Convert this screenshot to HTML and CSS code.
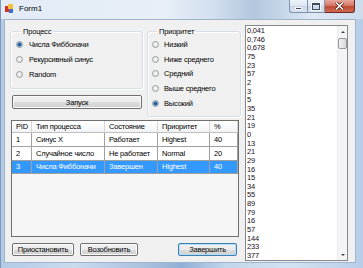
FILE: index.html
```html
<!DOCTYPE html>
<html lang="ru">
<head>
    <meta charset="UTF-8">
    <title>Form1</title>
    <link rel="stylesheet" href="styles.css">
</head>
<body>
    <div class="window">
        <div class="titlebar">
            <svg class="app-icon" width="9" height="9" viewBox="0 0 9 9">
                <rect x="0" y="2" width="4" height="6" fill="#d7301f"/>
                <rect x="3" y="0" width="5" height="5" fill="#f3c33a"/>
                <rect x="4" y="5" width="4" height="4" fill="#3d6fce"/>
            </svg>
            <span class="title">Form1</span>
            <div class="caption-buttons">
                <div class="cap cap-min"><span class="glyph-min"></span></div>
                <div class="cap cap-max"><span class="glyph-max"></span></div>
                <div class="cap cap-close">
                    <svg width="9" height="8" viewBox="0 0 9 8">
                        <path d="M1 0.5 L8 7.5 M8 0.5 L1 7.5" stroke="#3a1510" stroke-width="3"/>
                        <path d="M1 0.5 L8 7.5 M8 0.5 L1 7.5" stroke="#ffffff" stroke-width="1.6"/>
                    </svg>
                </div>
            </div>
        </div>

        <div class="client">
            <div class="left-col">
                <div class="top-row">
                    <div class="proc-col">
                        <fieldset class="group group-proc">
                            <legend>Процесс</legend>
                            <div class="radio checked"><span class="mark"></span>Числа Фиббоначи</div>
                            <div class="radio"><span class="mark"></span>Рекурсивный синус</div>
                            <div class="radio"><span class="mark"></span>Random</div>
                        </fieldset>
                        <button class="btn btn-start">Запуск</button>
                    </div>
                    <fieldset class="group group-prio">
                        <legend>Приоритет</legend>
                        <div class="radio"><span class="mark"></span>Низкий</div>
                        <div class="radio"><span class="mark"></span>Ниже среднего</div>
                        <div class="radio"><span class="mark"></span>Средний</div>
                        <div class="radio"><span class="mark"></span>Выше среднего</div>
                        <div class="radio checked"><span class="mark"></span>Высокий</div>
                    </fieldset>
                </div>

                <div class="grid">
                    <div class="grid-row grid-head">
                        <div class="cell">PID</div>
                        <div class="cell">Тип процесса</div>
                        <div class="cell">Состояние</div>
                        <div class="cell">Приоритет</div>
                        <div class="cell">%</div>
                    </div>
                    <div class="grid-row">
                        <div class="cell">1</div>
                        <div class="cell">Синус X</div>
                        <div class="cell">Работает</div>
                        <div class="cell">Highest</div>
                        <div class="cell">40</div>
                    </div>
                    <div class="grid-row">
                        <div class="cell">2</div>
                        <div class="cell">Случайное число</div>
                        <div class="cell">Не работает</div>
                        <div class="cell">Normal</div>
                        <div class="cell">20</div>
                    </div>
                    <div class="grid-row selected">
                        <div class="cell">3</div>
                        <div class="cell">Числа Фиббоначи</div>
                        <div class="cell">Завершен</div>
                        <div class="cell">Highest</div>
                        <div class="cell">40</div>
                    </div>
                </div>

                <div class="bottom-buttons">
                    <button class="btn btn-pause">Приостановить</button>
                    <button class="btn btn-resume">Возобновить</button>
                    <button class="btn btn-stop btn-default">Завершить</button>
                </div>
            </div>

            <div class="listbox">
                <div class="items">
                    <div>0,041</div>
                    <div>0,746</div>
                    <div>0,678</div>
                    <div>75</div>
                    <div>23</div>
                    <div>57</div>
                    <div>2</div>
                    <div>3</div>
                    <div>5</div>
                    <div>35</div>
                    <div>21</div>
                    <div>19</div>
                    <div>0</div>
                    <div>13</div>
                    <div>21</div>
                    <div>29</div>
                    <div>16</div>
                    <div>15</div>
                    <div>34</div>
                    <div>55</div>
                    <div>89</div>
                    <div>79</div>
                    <div>16</div>
                    <div>57</div>
                    <div>144</div>
                    <div>233</div>
                    <div>377</div>
                </div>
                <div class="scrollbar">
                    <div class="sb-btn"><span class="arrow-up"></span></div>
                    <div class="sb-thumb"></div>
                    <div class="sb-track"></div>
                    <div class="sb-btn"><span class="arrow-down"></span></div>
                </div>
            </div>
        </div>
    </div>
</body>
</html>
```

FILE: styles.css
```css
* {
    box-sizing: border-box;
}

body {
    margin: 0;
    width: 363px;
    height: 268px;
    overflow: hidden;
    font-family: 'Liberation Sans', Arial, sans-serif;
    font-size: 7.5px;
    letter-spacing: -0.2px;
    color: #1a1a1a;
    background: #ffffff;
}

.window {
    width: 363px;
    height: 268px;
    display: flex;
    flex-direction: column;
    border-left: 1px solid #7d98ba;
    background: linear-gradient(90deg, #b3cbe6 0%, #c9dbef 20%, #a9c1de 40%, #8fb0d6 50%, #c2d6ec 62%, #d3e2f3 80%, #b7cde7 100%);
}

.titlebar {
    height: 19px;
    display: flex;
    align-items: flex-start;
    flex-shrink: 0;
    background: linear-gradient(90deg, #e2ebf6 0%, #e8eff8 45%, #d3e0ef 58%, #b4c7de 70%, #c7d7ea 78%, #dfe8f4 86%, #cddcee 100%);
}

.app-icon {
    margin: 4px 0 0 4px;
}

.title {
    margin: 4px 0 0 5px;
    font-size: 8px;
    line-height: 9px;
    letter-spacing: 0;
    color: #000000;
}

.caption-buttons {
    display: flex;
    margin-left: auto;
    margin-right: 8px;
    height: 13px;
}

.cap {
    height: 13px;
    display: flex;
    align-items: center;
    justify-content: center;
    border: 1px solid #7f93ae;
    border-top: none;
    background: linear-gradient(#eef3fa 0%, #dde6f2 50%, #c9d6e7 51%, #d8e3f0 100%);
}

.cap-min {
    width: 18px;
    border-radius: 0 0 0 3px;
    border-right: none;
}

.cap-max {
    width: 18px;
}

.cap-close {
    width: 30px;
    border-color: #6c2a22;
    border-left: none;
    border-radius: 0 0 3px 0;
    background: linear-gradient(#e7a89d 0%, #d47866 45%, #c14a34 55%, #cf6a52 100%);
}

.glyph-min {
    width: 7px;
    height: 3px;
    margin-top: 4px;
    background: #3b4a5e;
    border: 1px solid #f6f8fb;
}

.glyph-max {
    width: 8px;
    height: 7px;
    border: 1px solid #3b4a5e;
    border-top-width: 2px;
    box-shadow: 0 0 0 1px #f6f8fb;
}

.client {
    width: 352px;
    height: 244px;
    margin-left: 3px;
    display: flex;
    padding: 5px 0 0 5px;
    background: #f0f0f0;
    border: 1px solid #9fb3cb;
}

.left-col {
    width: 231px;
    display: flex;
    flex-direction: column;
}

.top-row {
    display: flex;
    gap: 4px;
    height: 92px;
}

.proc-col {
    width: 133px;
    display: flex;
    flex-direction: column;
}

.group {
    margin: 2px 0 0 0;
    padding: 1px 0 0 5px;
    min-width: 0;
    border: 1px solid #d5dfe5;
    border-radius: 3px;
    box-shadow: inset 1px 1px 0 #ffffff, 1px 1px 0 #ffffff;
}

.group legend {
    margin-left: 5px;
    padding: 0 2px;
    line-height: 9px;
    color: #000000;
}

.group-proc {
    height: 62px;
}

.group-prio {
    width: 94px;
    height: 90px;
    padding-left: 4px;
}

.radio {
    display: flex;
    align-items: center;
    height: 15px;
    white-space: nowrap;
    color: #000000;
}

.group-prio .radio {
    height: 14.8px;
}

.mark {
    width: 7px;
    height: 7px;
    margin-right: 6px;
    flex-shrink: 0;
    border-radius: 50%;
    border: 1px solid #9a9b9c;
    background: radial-gradient(circle at 50% 40%, #f7f7f7 0%, #dcdcdc 100%);
    display: flex;
    align-items: center;
    justify-content: center;
}

.group-prio .mark {
    margin-right: 5px;
}

.checked .mark::after {
    content: "";
    width: 3px;
    height: 3px;
    border-radius: 50%;
    background: #1b4f8c;
    box-shadow: 0 0 0 1px #6d9dd0;
}

.btn {
    height: 14px;
    padding: 0;
    font: inherit;
    letter-spacing: inherit;
    color: #000000;
    border: 1px solid #707070;
    border-radius: 2px;
    background: linear-gradient(#f3f3f3 0%, #ebebeb 50%, #dddddd 51%, #cfcfcf 100%);
    box-shadow: inset 0 0 0 1px #fbfbfb;
}

.btn-start {
    width: 130px;
    margin: 6px 0 0 2px;
}

.grid {
    width: 228px;
    height: 117px;
    margin: 3px 0 0 1px;
    border: 1px solid #6f6f6f;
    background: #f6f6f6;
}

.grid-row {
    display: grid;
    grid-template-columns: 20px 73px 53px 52px 28px;
    height: 14px;
    background: #ffffff;
}

.grid-head {
    height: 12px;
    background: linear-gradient(#ffffff 0%, #f7f8fa 60%, #eef0f3 100%);
}

.cell {
    padding-left: 4px;
    line-height: 13px;
    white-space: nowrap;
    overflow: hidden;
    color: #000000;
    border-right: 1px solid #a0a0a0;
    border-bottom: 1px solid #a0a0a0;
}

.grid-head .cell {
    line-height: 11px;
    border-right-color: #d5d5d5;
    border-bottom-color: #c0c0c0;
}

.grid-row.selected {
    height: 13px;
    background: #3399ff;
}

.selected .cell {
    color: #ffffff;
    line-height: 12px;
}

.bottom-buttons {
    display: flex;
    margin-top: 6px;
}

.bottom-buttons .btn {
    height: 13px;
}

.btn-pause {
    width: 62px;
    margin-left: 2px;
}

.btn-resume {
    width: 58px;
    margin-left: 6px;
}

.btn-stop {
    width: 59px;
    margin-left: 40px;
}

.btn-default {
    border-color: #3c7fb1;
    box-shadow: inset 0 0 0 1px #b6def7;
}

.listbox {
    width: 103px;
    height: 236px;
    margin-left: 4px;
    display: flex;
    background: #ffffff;
    border: 1px solid #828790;
}

.items {
    flex: 1;
    overflow: hidden;
    padding: 1px 0 0 1px;
    line-height: 8.65px;
    color: #1a1020;
}

.scrollbar {
    width: 10px;
    display: flex;
    flex-direction: column;
    background: #f4f4f4;
    border-left: 1px solid #ececec;
}

.sb-btn {
    height: 11px;
    display: flex;
    align-items: center;
    justify-content: center;
}

.arrow-up,
.arrow-down {
    width: 0;
    height: 0;
    border-left: 2px solid transparent;
    border-right: 2px solid transparent;
}

.arrow-up {
    border-bottom: 2px solid #404040;
}

.arrow-down {
    border-top: 2px solid #404040;
}

.sb-thumb {
    height: 11px;
    margin: 1px 0 0 0;
    border: 1px solid #979797;
    border-radius: 2px;
    background: linear-gradient(90deg, #f1f1f1 0%, #e6e6e6 50%, #d6d6d6 100%);
}

.sb-track {
    flex: 1;
}
```
